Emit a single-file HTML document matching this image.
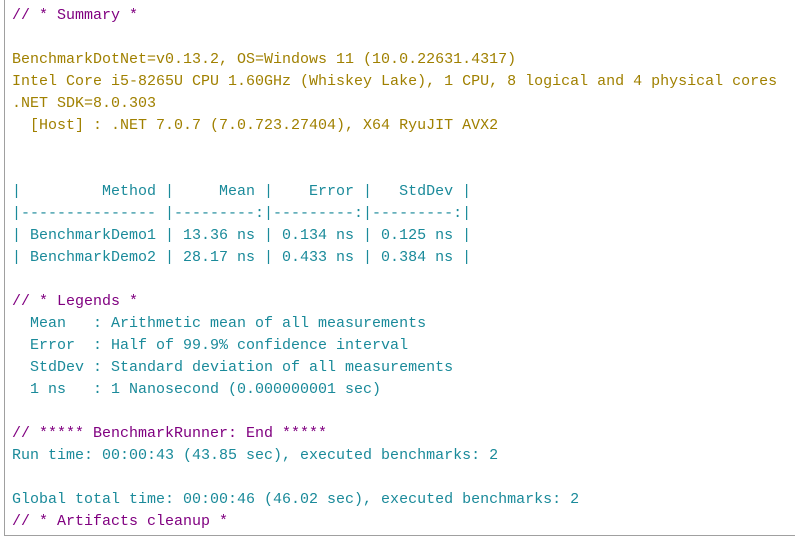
<!DOCTYPE html>
<html><head><meta charset="utf-8"><style>
html,body{margin:0;padding:0;background:#fff;width:795px;height:542px;overflow:hidden}
.box{position:absolute;left:4px;top:-2px;width:800px;height:538px;border-left:1px solid #a0a0a0;border-bottom:1px solid #a0a0a0;box-sizing:border-box}
pre{position:absolute;left:12px;top:5px;margin:0;font-family:"Liberation Mono",monospace;font-size:15px;line-height:22px;white-space:pre}
.c{color:#800080}.y{color:#a08000}.t{color:#1a8a9a}
</style></head><body><div class="box"></div>
<pre><span class="c">// * Summary *</span>

<span class="y">BenchmarkDotNet=v0.13.2, OS=Windows 11 (10.0.22631.4317)
Intel Core i5-8265U CPU 1.60GHz (Whiskey Lake), 1 CPU, 8 logical and 4 physical cores
.NET SDK=8.0.303
  [Host] : .NET 7.0.7 (7.0.723.27404), X64 RyuJIT AVX2</span>


<span class="t">|         Method |     Mean |    Error |   StdDev |
|--------------- |---------:|---------:|---------:|
| BenchmarkDemo1 | 13.36 ns | 0.134 ns | 0.125 ns |
| BenchmarkDemo2 | 28.17 ns | 0.433 ns | 0.384 ns |</span>

<span class="c">// * Legends *</span>
<span class="t">  Mean   : Arithmetic mean of all measurements
  Error  : Half of 99.9% confidence interval
  StdDev : Standard deviation of all measurements
  1 ns   : 1 Nanosecond (0.000000001 sec)</span>

<span class="c">// ***** BenchmarkRunner: End *****</span>
<span class="t">Run time: 00:00:43 (43.85 sec), executed benchmarks: 2</span>

<span class="t">Global total time: 00:00:46 (46.02 sec), executed benchmarks: 2</span>
<span class="c">// * Artifacts cleanup *</span></pre>
</body></html>
